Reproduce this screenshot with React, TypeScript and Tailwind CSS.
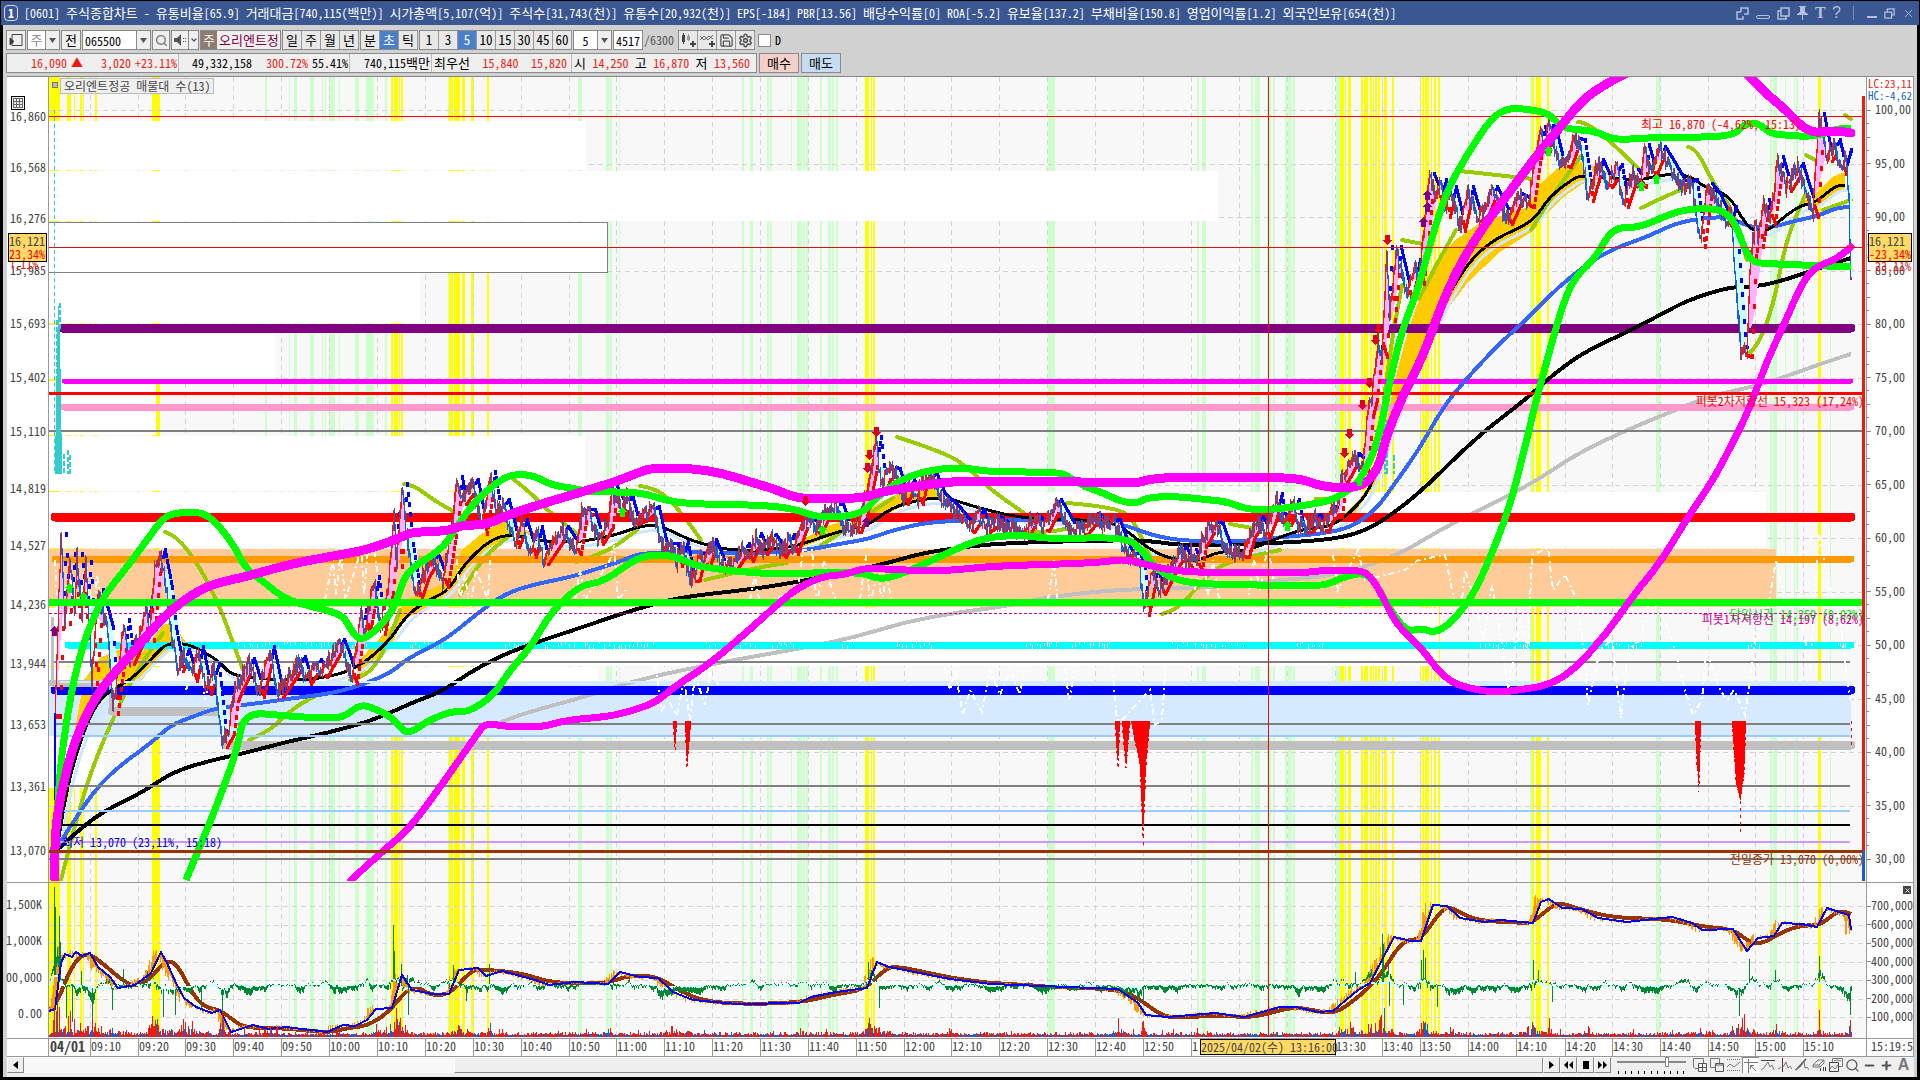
import React from 'react';
import {
  ChevronDown, Copy, Minus, Plus, Save, Search, Settings, X,
} from 'lucide-react';

type Point = [number, number];

// chart units: x 49..1866, y 77..1038
const LEFT = 49;
const TOP = 77;
const WIDTH = 1817;
const HEIGHT = 961;

const pctX = (x: number) => `${((x - LEFT) / WIDTH) * 100}%`;
const pctY = (y: number) => `${((y - TOP) / HEIGHT) * 100}%`;

const parse = (s: string): Point[] => s.trim().split(/\s+/).map((p) => p.split(',').map(Number) as Point);

const random = (seed: number) => () => {
  seed = (seed * 1664525 + 1013904223) % 4294967296;
  return seed / 4294967296;
};

// one value per pixel column
const sample = (pts: Point[], from: number, to: number) => {
  const out: number[] = [];
  let k = 0;
  for (let x = from; x <= to; x++) {
    while (k < pts.length - 2 && pts[k + 1][0] < x) k++;
    const [x0, y0] = pts[k];
    const [x1, y1] = pts[k + 1];
    const t = Math.min(1, Math.max(0, (x - x0) / Math.max(1, x1 - x0)));
    out.push(y0 + (y1 - y0) * t);
  }
  return out;
};

// smooth path through the points
const smooth = (s: string) => {
  const p = parse(s);
  let d = `M${p[0][0]} ${p[0][1]}`;
  for (let i = 1; i < p.length - 1; i++) {
    d += `Q${p[i][0]} ${p[i][1]} ${(p[i][0] + p[i + 1][0]) / 2} ${(p[i][1] + p[i + 1][1]) / 2}`;
  }
  const l = p[p.length - 1];
  return `${d}L${l[0]} ${l[1]}`;
};

const YELLOW_BANDS: Point[] = [
  [49, 60], [67, 71], [74, 75], [80, 82], [83, 84], [95, 97], [152, 160], [391, 393], [394, 398], [399, 400], [401, 403],
  [449, 453], [454, 460], [462, 465], [471, 474], [487, 489], [865, 869], [871, 872], [873, 875], [1340, 1344], [1345, 1346],
  [1348, 1351], [1361, 1363], [1364, 1368], [1370, 1372], [1373, 1374], [1375, 1377], [1378, 1380], [1382, 1383], [1384, 1387],
  [1392, 1394], [1420, 1421], [1422, 1424], [1425, 1429], [1431, 1432], [1434, 1436], [1438, 1440], [1532, 1534], [1536, 1541],
  [1547, 1549], [1818, 1821],
];

const GREEN_BANDS: Point[] = [
  [265, 267], [289, 290], [294, 297], [310, 314], [322, 323], [325, 326], [329, 335], [339, 340], [355, 359], [366, 374],
  [385, 387], [448, 449], [578, 582], [606, 609], [610, 612], [619, 620], [742, 744], [750, 753], [767, 769], [770, 772],
  [791, 792], [797, 802], [803, 805], [806, 808], [820, 822], [828, 831], [832, 834], [836, 838], [1048, 1055], [1197, 1199],
  [1202, 1206], [1251, 1253], [1255, 1260], [1267, 1271], [1273, 1275], [1285, 1287], [1288, 1292], [1293, 1295], [1332, 1333],
  [1336, 1340], [1530, 1532], [1656, 1660], [1770, 1772], [1773, 1777], [1785, 1786], [1794, 1795], [1796, 1798], [1830, 1831],
];

// volume-at-price rows: y0, y1, right edge
const PROFILE = [
  [121, 170, 586], [171, 221, 1218], [222, 272, 608], [273, 323, 420], [325, 379, 275], [381, 435, 156], [436, 491, 585],
  [492, 548, 1766], [608, 666, 1439], [667, 727, 598], [728, 788, 104],
];

const TIMES: [number, string][] = [
  [90, '09:10'], [138, '09:20'], [185, '09:30'], [233, '09:40'], [281, '09:50'], [329, '10:00'], [377, '10:10'], [425, '10:20'],
  [473, '10:30'], [521, '10:40'], [569, '10:50'], [616, '11:00'], [664, '11:10'], [712, '11:20'], [760, '11:30'], [808, '11:40'],
  [856, '11:50'], [904, '12:00'], [951, '12:10'], [999, '12:20'], [1047, '12:30'], [1095, '12:40'], [1143, '12:50'],
  [1191, '1'], [1335, '13:30'], [1382, '13:40'], [1420, '13:50'], [1468, '14:00'],
  [1516, '14:10'], [1565, '14:20'], [1612, '14:30'], [1660, '14:40'], [1708, '14:50'], [1755, '15:00'], [1803, '15:10'],
];

const LEFT_LABELS: [number, string][] = [
  [117, '16,860'], [168, '16,568'], [219, '16,276'], [271, '15,985'], [324, '15,693'], [378, '15,402'], [432, '15,110'],
  [489, '14,819'], [546, '14,527'], [605, '14,236'], [664, '13,944'], [725, '13,653'], [787, '13,361'], [851, '13,070'],
  [905, '1,500K'], [941, '1,000K'], [978, '00,000'], [1014, '0.00'],
];

const RIGHT_LABELS: [number, string][] = [
  ...Array.from({ length: 15 }, (_, i): [number, string] => [110 + i * 53.5, `${100 - i * 5},00`]),
  ...Array.from({ length: 7 }, (_, i): [number, string] => [906 + i * 18.5, `${7 - i}00,000`]),
];

// y, x0, x1, width, colour
const LEVELS: [number, number, number, number, string][] = [
  [116.5, 49, 1864, 1, '#ff0000'], [431, 49, 1864, 2, '#808080'], [662, 54, 1850, 2, '#808080'], [682, 60, 1850, 2, '#d6eaff'],
  [724, 54, 1850, 2, '#808080'], [736, 54, 1850, 2, '#99ccff'], [786, 54, 1850, 2, '#808080'], [811, 64, 1850, 2, '#99ccff'],
  [825, 54, 1850, 2, '#000000'], [842, 60, 1850, 2, '#cc99ff'], [859, 49, 1864, 2, '#808080'],
];

const THICK_LEVELS: [number, number, number, number, string][] = [
  [328, 62, 1851, 9, '#800080'], [381, 64, 1851, 5, '#ff00ff'], [407, 64, 1851, 7, '#ff99cc'],
  [517, 55, 1851, 9, '#ff0000'], [559, 55, 1851, 7, '#ff9900'], [645, 68, 1851, 7, '#00ffff'], [690, 55, 1851, 9, '#0000ff'],
  [683, 52, 109, 7, '#c0c0c0'], [711, 112, 222, 9, '#c0c0c0'], [745, 226, 1851, 9, '#c0c0c0'],
];

const FAST = '57,850 65,797 78,747 94,707 110,690 131,680 155,655 167,643 188,644 204,652 220,662 233,677 286,680 318,679 355,670 388,643 408,613 433,598 449,590 465,563 490,540 510,534 547,542 580,542 616,535 640,526 660,525 693,542 738,552 795,547 836,532 869,525 885,512 905,503 942,496 975,507 1024,519 1089,520 1113,522 1130,533 1146,547 1167,558 1195,562 1220,551 1248,551 1280,537 1304,529 1333,526 1353,510 1370,490 1385,445 1400,400 1422,350 1445,300 1470,260 1496,238 1533,222 1549,197 1574,178 1582,176 1619,178 1635,181 1672,173 1692,177 1704,187 1729,195 1741,217 1753,232 1770,230 1786,215 1802,205 1815,203 1835,186 1845,185';
const MID = '57,848 82,807 110,773 151,743 171,725 192,717 216,708 253,704 294,698 335,693 367,683 392,672 408,658 445,640 473,617 502,595 531,585 571,577 600,568 624,560 640,553 693,552 738,554 803,551 844,543 869,539 893,530 934,521 1024,519 1118,522 1150,535 1183,541 1244,542 1280,537 1321,534 1353,527 1378,507 1390,490 1419,450 1443,407 1468,377 1500,343 1529,317 1558,287 1590,262 1615,248 1647,237 1676,223 1704,218 1729,217 1749,227 1770,228 1798,220 1819,216 1835,208 1851,207';
const SLOW = '57,850 82,827 106,810 143,792 171,773 204,762 245,753 286,742 327,733 367,722 392,712 416,701 441,692 469,673 498,657 531,644 571,631 612,617 640,608 681,597 754,589 803,581 885,564 918,554 962,547 1007,543 1081,541 1146,540 1183,546 1280,543 1337,539 1370,529 1402,507 1431,482 1456,457 1488,428 1525,400 1549,378 1582,353 1627,332 1660,315 1688,300 1729,287 1753,287 1778,282 1811,271 1835,263 1851,258';
const SILVER = '490,727 510,718 543,708 584,697 640,679 722,662 803,648 856,637 905,622 954,613 1007,606 1048,597 1122,589 1211,588 1280,580 1321,577 1362,568 1402,553 1443,528 1484,508 1533,483 1578,453 1627,430 1668,413 1713,395 1753,387 1790,375 1823,363 1851,354';
const GREEN_UPPER = '55,845 59,780 65,730 75,673 88,630 102,600 110,588 127,567 147,540 163,518 175,513 192,512 206,514 220,527 235,547 245,568 265,583 286,600 318,608 343,615 351,630 359,640 371,635 392,613 400,590 408,570 441,550 453,533 473,503 502,478 518,474 535,476 551,485 571,488 592,492 640,492 664,500 689,504 762,505 795,509 816,517 844,517 864,512 877,497 897,482 918,473 946,468 967,468 991,472 1060,472 1069,477 1085,487 1101,492 1122,502 1138,503 1146,498 1171,496 1211,500 1228,502 1248,510 1280,509 1313,504 1333,500 1353,487 1362,477 1378,443 1390,380 1402,330 1419,287 1431,240 1447,190 1468,153 1492,117 1509,108 1525,109 1549,113 1562,128 1582,130 1598,132 1613,140 1647,138 1668,137 1733,137 1745,123 1758,123 1770,133 1782,135 1815,137 1839,128 1851,129';
const GREEN_LOWER = '186,880 204,837 220,797 237,750 244,712 286,716 322,718 343,718 359,705 371,707 392,717 404,732 412,732 429,720 453,711 469,712 494,695 510,670 531,647 551,612 580,585 604,582 640,555 673,555 693,565 722,570 771,574 803,574 824,572 864,573 877,579 893,577 918,567 958,548 987,537 1024,535 1048,539 1126,537 1142,550 1154,567 1175,580 1203,584 1252,585 1321,586 1333,582 1349,575 1366,573 1378,587 1390,610 1407,632 1421,628 1435,633 1451,623 1472,597 1488,563 1505,520 1517,480 1537,397 1549,353 1562,307 1574,278 1594,260 1613,227 1639,228 1672,213 1696,208 1725,210 1737,227 1745,250 1753,263 1778,264 1851,267';
const MAGENTA_UPPER = '55,880 54,840 61,790 75,740 92,703 108,680 135,650 163,617 188,597 212,584 245,577 286,565 327,557 367,550 402,537 412,532 449,531 461,525 486,525 510,514 551,501 612,483 640,472 652,468 689,468 722,473 750,482 775,489 795,498 824,499 864,498 881,492 905,488 938,483 967,481 1048,481 1113,483 1138,483 1150,479 1179,477 1296,477 1317,485 1337,488 1358,487 1370,480 1380,463 1386,437 1402,397 1423,357 1443,300 1464,257 1488,220 1509,193 1533,160 1558,130 1582,100 1607,83 1640,66 1690,50 1735,62 1753,80 1770,97 1786,110 1802,127 1815,133 1827,131 1839,131 1851,133';
const MAGENTA_LOWER = '351,880 384,850 408,830 433,797 457,763 478,733 485,723 510,727 543,727 567,720 604,717 624,713 640,708 656,702 677,685 705,667 738,640 779,603 799,587 824,576 844,575 864,568 885,569 926,571 958,570 991,566 1097,563 1122,559 1142,563 1166,570 1211,573 1304,573 1325,570 1358,570 1370,575 1382,595 1394,620 1407,635 1423,650 1435,667 1451,682 1468,688 1496,693 1525,689 1549,685 1574,670 1607,633 1635,593 1660,563 1688,517 1713,480 1729,450 1749,410 1766,363 1786,320 1802,283 1815,267 1835,260 1851,247';

const OLIVE = [
  '61,880 78,813 94,763 118,707 139,667 163,633', '165,532 176,535 200,567 220,607 233,643 245,675', '249,740 269,732 294,707 322,693',
  '350,680 367,677 385,650 400,610', '404,484 414,485 433,500 469,520', '512,478 531,493 547,510 576,533', '576,562 608,552 637,530',
  '640,486 658,488 681,512 701,540', '705,580 754,568 787,563', '820,546 848,528 893,498', '897,437 946,453 967,467 991,490 1024,513',
  '1028,532 1052,532 1073,527', '1067,503 1116,507 1134,520 1150,557', '1162,614 1175,611 1195,590 1220,563 1280,550', '1230,524 1252,528',
  '1316,499 1340,500', '1384,400 1390,350 1402,285', '1402,240 1423,244', '1419,299 1435,267 1456,230', '1460,171 1533,179',
  '1531,230 1549,200 1582,155', '1578,122 1586,122 1611,142 1639,169', '1641,208 1664,197 1692,185', '1688,147 1696,148 1713,183 1733,210 1747,260',
  '1747,355 1758,347 1774,303 1786,240 1806,193', '1806,155 1819,162', '1845,115 1851,119', '1823,210 1851,200', '460,595 480,560 510,535',
];

const CLOUDS = [
  '62,800 72,745 84,680 100,658 118,650 140,655 163,625 172,622 190,648 167,650 140,682 110,692 92,712 76,760 66,800',
  '355,665 392,625 405,600 430,590 450,580 462,550 480,535 500,522 512,522 535,535 512,536 490,552 465,575 450,590 425,610 405,618 388,650 360,675',
  '795,543 830,525 860,515 885,500 897,494 935,488 945,496 905,505 885,515 865,525 840,533 800,548',
  '1338,520 1360,498 1374,480 1385,430 1395,380 1404,345 1415,310 1435,262 1455,240 1480,223 1509,213 1529,207 1541,183 1558,168 1582,162 1607,172 1615,176 1590,182 1582,184 1562,198 1548,212 1533,231 1500,252 1468,282 1443,315 1423,363 1402,413 1384,460 1374,485 1350,520',
  '1800,203 1815,195 1832,177 1845,172 1845,188 1832,195 1815,208',
];

const PRICE = '55,713 61,537 65,620 70,557 75,613 77,557 82,613 86,565 92,680 98,593 108,630 113,710 124,623 129,660 139,637 147,607 149,637 155,570 160,553 167,590 171,630 178,667 184,653 192,677 198,650 206,690 214,667 222,743 229,730 233,697 237,687 249,662 259,693 269,650 278,693 300,660 306,680 316,663 322,673 339,643 344,655 352,680 361,613 365,630 374,580 380,630 388,590 394,517 397,563 402,487 408,547 416,597 424,573 433,557 443,583 453,520 457,480 461,500 473,483 482,530 490,475 496,513 504,503 514,543 522,523 531,553 537,530 543,560 563,530 576,550 582,513 590,513 598,540 608,523 612,490 622,510 627,497 633,520 640,517 654,510 662,547 673,547 677,562 683,545 689,578 695,576 699,557 705,563 711,543 720,565 732,565 744,547 748,557 756,537 762,550 771,538 781,553 789,538 793,550 801,527 805,517 816,530 826,510 838,507 844,525 856,528 862,513 867,490 871,470 876,440 881,487 887,470 895,472 903,500 909,483 918,500 922,480 932,478 940,497 954,510 969,528 979,513 985,528 995,520 1005,527 1024,532 1032,518 1044,527 1056,503 1064,517 1071,530 1083,530 1093,517 1105,525 1115,523 1122,543 1130,560 1134,553 1140,570 1144,611 1152,573 1160,590 1171,567 1181,550 1189,567 1191,553 1197,567 1201,543 1211,525 1218,527 1226,550 1244,553 1250,533 1258,520 1265,533 1271,517 1277,497 1280,517 1286,521 1294,503 1298,527 1307,528 1315,518 1323,528 1331,510 1337,513 1341,480 1347,470 1354,457 1363,467 1368,413 1372,397 1378,340 1382,353 1387,250 1390,317 1396,250 1407,297 1415,263 1419,280 1423,240 1429,177 1437,197 1441,183 1445,213 1451,190 1460,227 1468,190 1476,217 1484,210 1492,190 1507,220 1517,197 1529,203 1535,160 1540,130 1545,147 1549,123 1558,160 1566,163 1574,142 1580,143 1588,197 1598,163 1607,183 1617,168 1623,203 1633,173 1641,183 1644,148 1651,173 1660,150 1668,163 1682,187 1692,183 1700,243 1707,187 1715,197 1727,223 1731,210 1737,297 1741,350 1747,353 1751,253 1756,223 1758,243 1764,203 1770,220 1778,160 1786,187 1798,167 1804,187 1813,213 1819,117 1827,157 1835,143 1841,170 1846,153 1849,203 1851,280';

const WHITE_TRACES = [
  '55,560 58,620 70,570 76,630 86,560 92,640 97,575 108,640', '325,600 333,560 336,595 341,550 345,600 358,560 361,545 364,595 368,550 375,552 380,600',
  '448,590 453,555 456,545 460,600 465,575 470,610 476,570 488,600 490,560', '575,600 580,570 585,600 610,560 614,545 618,600 626,590',
  '750,600 755,575 760,605 798,590 803,550 812,550 817,605 824,560 832,590 838,605', '860,600 866,555 870,605 878,570 882,605 886,575 893,605',
  '1048,600 1054,560 1058,605', '1195,590 1202,545 1208,595 1213,560 1220,605', '1247,605 1254,560 1260,590 1268,545 1275,590', '186,690 200,650 205,700 214,660 222,735',
  '945,668 950,690 955,670 963,715 970,690 982,712 990,670 1000,695 1010,670 1020,695 1024,670', '1065,668 1069,700 1075,670', '1112,665 1117,720 1122,720 1150,690 1155,725 1162,720 1166,660',
  '655,665 662,710 668,700 677,715 684,680 690,720 695,675 705,705 712,665 718,685', '1333,555 1338,590 1358,550 1365,580 1405,570 1418,560 1445,555 1452,590 1460,620 1465,570 1475,600 1483,640 1492,585 1503,650 1508,690 1520,620 1528,650 1532,555 1548,548 1553,590 1565,575 1577,600 1584,650 1588,705 1600,650 1612,640 1621,718 1628,650 1640,640 1650,600 1660,610 1672,640 1685,690 1693,715 1702,700 1706,650 1720,690 1727,700 1734,690 1745,715 1755,640 1765,625 1776,560 1785,600 1797,590 1810,670 1819,535 1830,590 1840,620 1850,700',
];

// ranges where the cyan level is broken up by white ticks
const CYAN_BREAKS: Point[] = [
  [238, 330], [352, 372], [410, 445], [505, 530], [545, 575], [585, 656], [706, 720], [740, 760], [772, 796], [842, 858],
  [897, 936], [1026, 1060], [1072, 1112], [1172, 1190], [1195, 1216], [1222, 1244], [1297, 1325], [1480, 1530], [1608, 1625],
  [1628, 1645], [1748, 1760], [1806, 1815], [1838, 1850],
];

const DROPS = [
  '673,721 677,721 675,750', '685,721 691,721 687,768', '1115,721 1120,721 1118,768', '1122,721 1130,721 1126,768', '1131,721 1150,721 1146,765 1143,838 1140,765',
  '1695,721 1701,721 1699,785 1697,765', '1732,721 1746,721 1744,775 1740,800 1736,780',
];

const BROWN = '49,1011 57,1003 67,977 78,957 90,954 102,963 122,980 135,987 151,978 163,963 173,961 182,973 192,993 204,1007 220,1010 233,1020 245,1028 286,1028 327,1033 347,1028 367,1026 388,1013 404,993 416,985 429,995 449,995 469,973 478,969 522,973 551,983 604,984 624,977 640,975 660,978 681,992 705,1001 738,1004 799,1003 836,994 864,990 885,969 897,966 946,977 987,983 1028,985 1048,987 1118,989 1138,998 1162,1016 1179,1018 1220,1015 1252,1018 1280,1010 1300,1007 1329,1014 1345,1008 1378,980 1402,940 1421,940 1439,913 1449,906 1468,917 1484,921 1525,923 1533,922 1553,905 1562,903 1582,910 1615,918 1668,919 1704,927 1733,929 1749,942 1762,944 1782,932 1802,925 1819,926 1835,913 1843,911 1851,914';
const NAVY = '49,1011 55,1009 61,963 65,954 72,957 76,952 82,956 90,953 98,967 110,977 118,988 135,985 151,973 161,952 167,963 176,983 184,998 196,1007 212,1013 220,1010 231,1032 253,1025 269,1029 286,1027 327,1032 343,1025 355,1026 367,1020 376,1009 392,1008 402,975 412,990 433,994 449,994 459,970 478,968 486,976 502,971 535,980 549,985 576,982 608,984 620,972 640,977 658,978 673,992 693,1000 738,1004 799,1003 811,997 836,992 867,988 877,962 889,967 950,979 991,984 1118,989 1138,1003 1146,1015 1167,1017 1215,1013 1244,1017 1280,1007 1296,1007 1317,1012 1333,1011 1358,990 1370,983 1382,960 1394,937 1411,941 1421,941 1433,905 1447,906 1460,918 1484,922 1500,920 1533,923 1541,902 1549,899 1562,908 1582,909 1598,918 1627,922 1672,917 1692,923 1702,930 1733,929 1747,951 1758,938 1774,936 1782,923 1802,924 1817,927 1827,908 1839,912 1849,915 1851,930';

// oscillator extremes that stand out of the noise
const SPIKES: Record<number, number> = {
  54: -90, 55: -70, 59: -64, 60: -40, 66: 30, 72: 36, 81: -16, 92: 42, 112: 20, 123: -18, 147: -14, 163: 26, 175: 24, 201: 20, 222: 38,
  393: -56, 394: -30, 401: -24, 408: 26, 453: -18, 466: 14, 489: -22, 868: -20, 879: 20, 1143: 14, 1355: -14, 1382: -50, 1383: -40, 1389: 22, 1403: 18,
  1421: -22, 1423: -32, 1425: -24, 1437: 20, 1533: -22, 1538: -14, 1552: 14, 1739: 26, 1749: -26, 1775: -14, 1819: -28, 1850: 26,
};

const HOT: [number, number, number][] = [
  [57, 60, 6], [70, 25, 14], [92, 18, 10], [112, 14, 12], [157, 28, 12], [185, 14, 20], [222, 24, 3], [270, 8, 12], [376, 12, 6], [396, 28, 12], [460, 12, 14],
  [490, 22, 3], [608, 12, 4], [672, 10, 8], [687, 8, 6], [800, 8, 5], [868, 22, 8], [878, 8, 14], [949, 8, 4], [1118, 12, 8], [1142, 14, 4],
  [1341, 12, 6], [1350, 14, 6], [1370, 14, 10], [1384, 46, 8], [1425, 24, 10], [1450, 9, 8], [1532, 14, 14], [1549, 18, 4], [1588, 10, 4], [1700, 8, 12], [1742, 18, 14],
  [1775, 10, 8], [1819, 26, 4], [1850, 16, 6],
];

const DOWN_ARROWS: Point[] = [
  [876, 432], [869, 455], [867, 468], [805, 501], [1387, 240], [1378, 329], [1375, 340], [1369, 383], [1362, 405], [1349, 434], [1344, 453],
];
const PURPLE_ARROWS: Point[] = [[54, 631], [866, 522], [1423, 222], [1427, 207], [1427, 195]];
const GREEN_ARROWS: Point[] = [
  [69, 588], [83, 597], [473, 504], [622, 512], [822, 530], [1287, 526], [1359, 481], [1548, 151], [1641, 186], [1656, 179],
];

const buildPrice = () => {
  const rnd = random(7);
  const clean = sample(parse(PRICE), 55, 1851);
  const line = clean.map((y) => y + (rnd() - 0.5) * 12);
  let red = '';
  let blue = '';
  let highs = '';
  let lows = '';
  let rise = '';
  let fall = '';
  line.forEach((y, i) => {
    const x = 55 + i;
    const next = line[i + 1] ?? y;
    const pad = 1 + rnd() * 5;
    const bar = `M${x + 0.5} ${(Math.min(y, next) - pad).toFixed(1)}V${(Math.max(y, next) + pad).toFixed(1)}`;
    if (next > y) blue += bar;
    else red += bar;
    // trailing stops: highs above a falling leg, lows under a rising one
    const at = Math.max(0, i - 5);
    const lag = clean[at];
    const step = clean[at + 1] - lag;
    const len = Math.min(4, Math.max(2, Math.abs(step)));
    if (clean[i] - lag > 2) highs += `M${x + 0.5} ${(lag - 5).toFixed(1)}v${(len + 1).toFixed(1)}`;
    if (lag - clean[i] > 2) lows += `M${x + 0.5} ${(lag + 6).toFixed(1)}v${(-len - 1).toFixed(1)}`;
    const old = line.slice(Math.max(0, i - 14), i + 1);
    const avg = old.reduce((a, b) => a + b, 0) / old.length;
    const gap = `M${x + 0.5} ${avg.toFixed(1)}V${y.toFixed(1)}`;
    if (avg > y) rise += gap;
    else fall += gap;
  });
  return { red, blue, highs, lows, rise, fall };
};

const buildLower = () => {
  const rnd = random(21);
  const navy = sample(parse(NAVY), 49, 1851);
  let orange = '';
  let osc = '';
  let base = '';
  let volRed = '';
  let volBlue = '';
  let drift = 0;
  navy.forEach((y, i) => {
    const x = 49 + i + 0.5;
    const ahead = navy[Math.min(i + 6, navy.length - 1)];
    const move = ahead - y;
    const tip = y + move * 0.9 + (rnd() - 0.5) * (4 + Math.abs(move) * 0.9);
    orange += `M${x} ${y.toFixed(1)}V${tip.toFixed(1)}`;
    const mid = 986 + Math.max(-10, Math.min(10, move * 0.3));
    base += `${i ? 'L' : 'M'}${x} ${mid.toFixed(1)}`;
    drift = drift * 0.84 + (rnd() - 0.5) * (5 + Math.abs(move) * 0.7);
    const swing = SPIKES[49 + i] ?? drift + move * 0.15;
    const from = SPIKES[49 + i] ? mid : mid + swing * 0.4;
    osc += `M${x} ${(from - 1).toFixed(1)}V${(mid + swing + 1).toFixed(1)}`;
    let h = 1 + rnd() * 3;
    HOT.forEach(([hx, top, w]) => {
      const d = Math.abs(49 + i - hx) / w;
      if (d < 1.6) h += top * Math.exp(-d * d * 2) * rnd() * rnd() * 1.3;
      if (49 + i === hx) h = top;
    });
    if (rnd() > 0.95) h += 6 * rnd();
    const bar = `M${x} 1037V${(1036 - h).toFixed(1)}`;
    if (rnd() > 0.42) volRed += bar;
    else volBlue += `M${x} 1037V${(1036 - h * 0.6).toFixed(1)}`;
  });
  return { orange, osc, base, volRed, volBlue };
};

const buildTicks = () => {
  const rnd = random(3);
  let d = '';
  CYAN_BREAKS.forEach(([a, b]) => {
    for (let x = a; x < b; x += 2 + Math.floor(rnd() * 5)) d += `M${x + 0.5} ${642 + Math.floor(rnd() * 4)}v${2 + Math.floor(rnd() * 4)}`;
  });
  return d;
};

const price = buildPrice();
const lower = buildLower();
const cyanTicks = buildTicks();

const Plot: React.FC = () => (
  <svg
    className="absolute inset-0 h-full w-full"
    viewBox={`${LEFT} ${TOP} ${WIDTH} ${HEIGHT}`}
    preserveAspectRatio="none"
    shapeRendering="crispEdges"
    fill="none"
    role="img"
    aria-label="오리엔트정공 차트"
  >
    <defs>
      <clipPath id="main-pane"><rect x="49" y="77" width="1817" height="804" /></clipPath>
    </defs>
    <rect x="49" y="77" width="1817" height="961" fill="#f8f8f8" />
    {GREEN_BANDS.map(([a, b]) => <rect key={a} x={a} y="77" width={b - a} height="959" fill="#ccffcc" />)}
    {YELLOW_BANDS.map(([a, b]) => <rect key={a} x={a} y="77" width={b - a} height="959" fill="#ffff00" />)}
    <g stroke="#d4d4d4" strokeDasharray="5 4">
      {TIMES.map(([x]) => <path key={x} d={`M${x + 0.5} 77V1037`} />)}
      <path d="M1239.5 77V1037M1287.5 77V1037" />
      {RIGHT_LABELS.map(([y]) => <path key={y} d={`M49 ${Math.round(y) + 0.5}H1864`} />)}
    </g>
    {PROFILE.map(([y0, y1, x]) => <rect key={y0} x="49" y={y0} width={x - 49} height={y1 - y0} fill="#fff" />)}
    <rect x="49" y="549" width="1727" height="58" fill="#ffcc99" />
    <rect x="49" y="681" width="1802" height="55" fill="#d6eaff" />
    <rect x="48.5" y="222.5" width="559" height="50" stroke="#808080" />

    <g clipPath="url(#main-pane)">
      {CLOUDS.map((c) => <polygon key={c} points={c} fill="#ffcc00" />)}
      <path d={smooth(SILVER)} stroke="#c0c0c0" strokeWidth="4" />
      <path d={smooth(FAST)} stroke="#cfe6ff" strokeWidth="3" transform="translate(3 5)" />
      {OLIVE.map((o) => <path key={o} d={smooth(o)} stroke="#99cc00" strokeWidth="4" strokeLinecap="round" />)}
      {THICK_LEVELS.map(([y, a, b, w, c]) => (
        <path key={y} d={`M${a} ${y}H${b}`} stroke={c} strokeWidth={w} strokeLinecap="round" />
      ))}
      <path d={cyanTicks} stroke="#fff" />
      <path d="M52 617V683M110 683V711M222 711V745" stroke="#c0c0c0" strokeWidth="3" />
      <path d={smooth(SLOW)} stroke="#000" strokeWidth="4" />
      <path d={smooth(MID)} stroke="#3366ff" strokeWidth="4" />
      <path d={smooth(FAST)} stroke="#000" strokeWidth="3" />
      {LEVELS.map(([y, a, b, w, c]) => <path key={y} d={`M${a} ${y}H${b}`} stroke={c} strokeWidth={w} />)}
      <path d={price.rise} stroke="#ffb3ff" />
      <path d={price.fall} stroke="#ccffff" />
      {WHITE_TRACES.map((t) => <polyline key={t} points={t} stroke="#fff" strokeWidth="2" strokeDasharray="6 4 2 3" />)}
      {DROPS.map((d) => <polygon key={d} points={d} fill="#ff0000" stroke="#ff0000" strokeDasharray="3 3" />)}
      <path d="M1143 800V845M1698 770V792M1740 780V835M1851 721V745" stroke="#ff0000" strokeDasharray="3 4" />
      <path d="M54.5 110V474" stroke="#33cccc" strokeDasharray="4 3" />
      <polygon points="55,474 56,400 58,310 59,303 61,390 62,474" fill="#33cccc" />
      <path d="M60 303V330M57 320V474M64 454V474M68 450V474M70 455V474" stroke="#33cccc" strokeDasharray="5 2" strokeWidth="2" />
      <path d="M1379 440V474M1385 400V474M1387 420V474M1394 455V474" stroke="#33cccc" strokeDasharray="6 2" strokeWidth="2" />
      <path d={price.highs} stroke="#0000ff" strokeWidth="3" />
      <path d={price.lows} stroke="#ff0000" strokeWidth="3" />
      <path d={price.blue} stroke="#1a5fd0" />
      <path d={price.red} stroke="#ee1c10" />
      <path d="M54.5 713V880" stroke="#0000ff" strokeWidth="2" />
      <path d="M49 393H1864" stroke="#ff0000" strokeWidth="3" />
      <path d="M49 602H1864" stroke="#00ff00" strokeWidth="7" />
      <path d="M49 613.5H1864" stroke="#cc0099" strokeDasharray="3 2" />
      <path d={smooth(GREEN_UPPER)} stroke="#00ff00" strokeWidth="7" strokeLinejoin="round" />
      <path d={smooth(GREEN_LOWER)} stroke="#00ff00" strokeWidth="7" strokeLinejoin="round" />
      <path d={smooth(MAGENTA_LOWER)} stroke="#ff00ff" strokeWidth="7" strokeLinejoin="round" strokeLinecap="round" />
      <path d={smooth(MAGENTA_UPPER)} stroke="#ff00ff" strokeWidth="9" strokeLinejoin="round" strokeLinecap="round" />
      <path d="M49 851.5H1864" stroke="#993300" strokeWidth="3" />
      {DOWN_ARROWS.map(([x, y]) => <path key={`${x}-${y}`} d={`M${x - 2} ${y - 5}h5v5h2l-4.5 5l-4.5 -5h2z`} fill="#dd0022" />)}
      {PURPLE_ARROWS.map(([x, y]) => <path key={`${x}-${y}`} d={`M${x - 2} ${y + 5}h5v-5h2l-4.5 -5l-4.5 5h2z`} fill="#800080" />)}
      {GREEN_ARROWS.map(([x, y]) => <path key={`${x}-${y}`} d={`M${x - 2} ${y + 5}h5v-5h2l-4.5 -5l-4.5 5h2z`} fill="#00ff00" />)}
    </g>

    <path d="M49 882.5H1866" stroke="#999" />
    <path d={smooth(BROWN)} stroke="#993300" strokeWidth="4" />
    <path d={lower.orange} stroke="#ff9900" />
    <path d={lower.base} stroke="#ccffff" strokeWidth="2" />
    <path d={lower.osc} stroke="#008833" />
    <polyline points={NAVY} stroke="#0000ff" strokeWidth="2" />
    <path d={lower.volBlue} stroke="#1a5fd0" />
    <path d={lower.volRed} stroke="#ee1c10" />

    <path d="M49 247.5H1864M1268.5 77V1037" stroke="#dd1111" />
    <path d="M1863.5 96V851" stroke="#ee1c10" strokeWidth="3" />
    <path d="M1863.5 851V881" stroke="#1a5fd0" strokeWidth="3" />
  </svg>
);

const Axis: React.FC<{ side: 'left' | 'right'; labels: [number, string][] }> = ({ side, labels }) => (
  <ul className="absolute inset-0 text-[#444]">
    {labels.map(([y, text]) => (
      <li
        key={`${y}${text}`}
        className={`absolute -translate-y-1/2 leading-4 ${side === 'left' ? 'right-0.5' : 'left-1'} ${side === 'left' && y > 890 ? 'pr-1' : ''} ${side === 'right' && y < 890 ? 'pl-1' : ''}`}
        style={{ top: pctY(y - 1) }}
      >
        {text}
      </li>
    ))}
  </ul>
);

const PlotLabel: React.FC<{ y: number; x?: number; right?: number; className: string; children: string }> = ({ y, x, right, className, children }) => (
  <span
    className={`absolute -translate-y-1/2 leading-4 whitespace-nowrap ${className}`}
    style={{ top: pctY(y - 1), left: x === undefined ? undefined : pctX(x), right: right === undefined ? undefined : `${((1866 - right) / WIDTH) * 100}%` }}
  >
    {children}
  </span>
);

const TITLE = '[0601] 주식종합차트 - 유통비율[65.9] 거래대금[740,115(백만)] 시가총액[5,107(억)] 주식수[31,743(천)] 유통수[20,932(천)] EPS[-184] PBR[13.56] 배당수익률[0] ROA[-5.2] 유보율[137.2] 부채비율[150.8] 영업이익률[1.2] 외국인보유[654(천)]';

const Mixed: React.FC<{ text: string }> = ({ text }) => (
  <>
    {text.split(/([가-힣]+)/).map((run, i) => (i % 2 ? <span key={i} className="text-[13px]">{run}</span> : run))}
  </>
);

const TitleBar: React.FC = () => (
  <header className="flex h-6 items-center justify-between bg-[#3a5792] pr-1 pl-[3px] text-white">
    <div className="flex items-center gap-1.5 whitespace-pre">
      <span className="flex h-4 w-3.5 items-center justify-center rounded-sm border border-white/80 font-bold">1</span>
      <h1 className="leading-5"><Mixed text={TITLE} /></h1>
    </div>
    <div className="flex items-center gap-[7px] text-[#b4c0da]">
      <button aria-label="새 창">
        <svg width="13" height="13" viewBox="0 0 13 13" fill="none" stroke="currentColor" strokeWidth="1.5"><path d="M5 5V1h7v6H8M4 5H1v7h6V9M1 5h4" /></svg>
      </button>
      <button aria-label="접기" className="flex h-3 w-3.5 items-end"><span className="h-1 w-full rounded-full border border-current" /></button>
      <button aria-label="복사">
        <svg width="13" height="13" viewBox="0 0 13 13" fill="none" stroke="currentColor" strokeWidth="1.5"><path d="M4 1h8v8H4zM4 4H1v8h8V9" /></svg>
      </button>
      <button aria-label="고정">
        <svg width="11" height="14" viewBox="0 0 11 14" fill="currentColor"><path d="M2 0h7v1H8v5l3 2v1H6v5H5V9H0V8l3-2V1H2z" /></svg>
      </button>
      <button className="w-2.5 font-['Liberation_Serif',serif] text-[16px] leading-4 font-bold">T</button>
      <button className="w-2 font-['Liberation_Sans',sans-serif] text-[16px] leading-4">?</button>
      <span className="mx-1.5 h-3.5 w-px bg-[#7a8db8]" />
      <button aria-label="최소화" className="flex h-2.5 w-2.5 items-end"><span className="h-0.5 w-full bg-current" /></button>
      <button aria-label="이전 크기">
        <svg width="11" height="11" viewBox="0 0 13 13" fill="none" stroke="currentColor" strokeWidth="1.5"><path d="M4 4V1h8v7H9M1 5h8v7H1z" /></svg>
      </button>
      <button aria-label="닫기"><X size={13} strokeWidth={1.5} /></button>
    </div>
  </header>
);

const box = 'flex h-5 items-center justify-center border border-[#8a8a8a] bg-[#efefef]';

const cell = 'flex w-[19px] items-center justify-center border-r border-[#999]';

const Group: React.FC<{ items: string[]; active?: string }> = ({ items, active }) => (
  <div className="flex h-5 border-y border-l border-[#8a8a8a] bg-[#e8e8e8] text-[13px]">
    {items.map((item) => (
      <button key={item} className={`${cell} leading-4 ${item === active ? 'bg-[#4a80c8] text-white' : ''}`}>{item}</button>
    ))}
  </div>
);

const Arrow: React.FC<{ label: string }> = ({ label }) => (
  <button aria-label={label} className={`${box} w-3.5 border-l-0`}>
    <svg width="7" height="5" viewBox="0 0 7 5" fill="#555"><path d="M0 0h7L3.5 5z" /></svg>
  </button>
);

const Toolbar: React.FC = () => (
  <div className="flex items-center gap-px pl-[3px]">
    <button aria-label="패널" className={`${box} w-5`}>
      <svg width="14" height="14" viewBox="0 0 14 14" fill="none" stroke="#444"><path d="M3 1.5h10v11H3z" /><path d="M1 5v7l4-3.5z" fill="#333" /></svg>
    </button>
    <div className="flex"><button className={`${box} w-[19px] bg-white text-[13px] text-[#888]`}>주</button><Arrow label="종목 구분" /></div>
    <button className={`${box} w-5 text-[13px]`}>전</button>
    <div className="flex">
      <input aria-label="종목코드" defaultValue="065500" className="h-5 w-[55px] border border-[#8a8a8a] bg-white px-0.5" />
      <Arrow label="종목 목록" />
    </div>
    <button aria-label="종목 찾기" className={`${box} w-[18px]`}><Search size={13} color="#777" strokeWidth={2.5} /></button>
    <div className="flex">
      <button aria-label="소리" className={`${box} w-[18px]`}>
        <svg width="12" height="12" viewBox="0 0 12 12" fill="#555"><path d="M0 4h3l4-4v12l-4-4H0zM9 4h1v1H9zM11 4h1v1h-1zM9 7h1v1H9zM11 7h1v1h-1z" /></svg>
      </button>
      <button aria-label="소리 설정" className={`${box} w-2.5 border-l-0`}><ChevronDown size={8} strokeWidth={4} color="#555" /></button>
    </div>
    <div className="flex h-5 w-[81px] items-center gap-0.5 overflow-hidden border border-[#8a8a8a] bg-[#efefef] text-[13px] whitespace-nowrap text-[#800040]">
      <span className="flex h-full w-4 shrink-0 items-center justify-center bg-[#8f7b70] text-white">주</span>
      <span>오리엔트정</span>
    </div>
    <Group items={['일', '주', '월', '년']} />
    <Group items={['분', '초', '틱']} active="초" />
    <Group items={['1', '3', '5', '10', '15', '30', '45', '60']} active="5" />
    <div className="flex">
      <input aria-label="주기" defaultValue="5" className="h-5 w-[25px] border border-[#8a8a8a] bg-white text-center" />
      <Arrow label="주기 목록" />
    </div>
    <input aria-label="표시 봉수" defaultValue="4517" className="h-5 w-[30px] border border-[#8a8a8a] bg-white text-center" />
    <span className="w-[33px] whitespace-nowrap text-[#555]">/6300</span>
    <div className="flex h-5 border-y border-l border-[#8a8a8a] bg-[#e8e8e8]">
      <button aria-label="봉 추가" className={cell}>
        <svg width="15" height="15" viewBox="0 0 15 15" fill="#444"><path d="M1 2h3v7H1zM2 0h1v11H2z" /><path d="M6 3h3v4H6zM7 1h1v7H7z" fill="#999" /><path d="M11 8v2H9v2h2v2h2v-2h2v-2h-2V8z" /></svg>
      </button>
      <button aria-label="지표 추가" className={cell}>
        <svg width="15" height="15" viewBox="0 0 15 15" fill="none" stroke="#666"><path d="M0 7l4-4 4 4 5-5M0 3l4 4 5-4 4 3" /><path d="M12 8v6M9 11h6" strokeWidth="2" stroke="#444" /></svg>
      </button>
      <button aria-label="저장" className={cell}><Save size={15} color="#555" /></button>
      <button aria-label="설정" className={cell}><Settings size={15} color="#555" strokeWidth={2.5} /></button>
    </div>
    <label className="flex items-center gap-1 pl-0.5">
      <input type="checkbox" className="h-[13px] w-[13px] appearance-none border border-[#8a8a8a] bg-white" />
      D
    </label>
  </div>
);

const QuoteRow: React.FC = () => (
  <div className="flex items-center gap-0.5 pl-[3px] whitespace-nowrap">
    <dl className="flex h-5 divide-x divide-[#bbb] border border-[#8a8a8a] bg-[#efefef] leading-[18px] text-[#ee1c10]">
      <div className="flex w-[172px] justify-end gap-1 pr-px">
        <dd>16,090</dd>
        <dd className="w-3">▲</dd>
        <dd className="w-11 text-right">3,020</dd>
        <dd>+23.11%</dd>
      </div>
      <div className="flex w-[171px] justify-end gap-1 pr-px">
        <dd className="text-black">49,332,158</dd>
        <dd className="w-[52px] text-right">300.72%</dd>
        <dd className="text-black">55.41%</dd>
      </div>
      <div className="w-[82px] pr-px text-right text-black"><dd><Mixed text="740,115백만" /></dd></div>
      <div className="flex w-[140px] justify-between pr-1 pl-0.5"><dt className="text-[13px] text-black">최우선</dt><dd>15,840</dd><dd>15,820</dd></div>
      <div className="flex w-[184px] justify-between pr-1.5 pl-0.5">
        <dt className="text-[13px] text-black">시</dt><dd>14,250</dd><dt className="text-[13px] text-black">고</dt><dd>16,870</dd><dt className="text-[13px] text-black">저</dt><dd>13,560</dd>
      </div>
    </dl>
    <button className="h-5 w-10 border border-[#8a8a8a] bg-[#f5d0ca] text-[13px] leading-4">매수</button>
    <button className="h-5 w-10 border border-[#8a8a8a] bg-[#c5dcf2] text-[13px] leading-4">매도</button>
  </div>
);

const CrossBadge: React.FC<{ second: string }> = ({ second }) => (
  <div className="absolute inset-x-px z-10 h-[29px] overflow-hidden border border-black bg-[#ffd966] leading-[13px]" style={{ top: pctY(233) }}>
    <p className="text-[#444]">16,121</p>
    <p className="text-[#ff0000]">{second}</p>
  </div>
);

const ChartPanel: React.FC = () => (
  <main className="flex flex-1 border-t border-[#888] bg-white">
    <div className="relative w-[42px] border-r border-[#999]">
      <Axis side="left" labels={LEFT_LABELS} />
      <button aria-label="표" className="absolute top-[19px] left-1 flex h-3.5 w-3.5 items-center justify-center border border-black bg-[#eee]">
        <svg width="10" height="10" viewBox="0 0 10 10" stroke="#666" fill="none" shapeRendering="crispEdges"><path d="M.5.5h9v9h-9zM.5 3.5h9M.5 6.5h9M3.5 .5v9M6.5 .5v9" /></svg>
      </button>
      <CrossBadge second="23,34%" />
      <p className="absolute left-1 leading-3 text-[#ee1c10]" style={{ top: pctY(258) }}>ı,11%</p>
      <span className="absolute inset-x-0 h-px bg-[#999]" style={{ top: pctY(882) }} />
    </div>

    <div className="relative flex-1 overflow-hidden">
      <Plot />
      <p className="absolute top-px left-[11px] border border-[#bbb] bg-[#efefef] px-[3px] leading-[14px] whitespace-nowrap text-[#444]">오리엔트정공 매물대 수(13)</p>
      <span className="absolute top-[5px] left-[3px] h-1.5 w-1.5 border border-[#777] bg-[#bbb]" />
      <PlotLabel y={125} right={1801} className="text-[#ff0000]">최고 16,870 (-4,62%, 15:13)</PlotLabel>
      <PlotLabel y={402} right={1864} className="text-[#ff0000]">피봇2차저항선 15,323 (17,24%)</PlotLabel>
      <PlotLabel y={615} right={1864} className="text-[#00e000]">당일시가 14,250 (9,03%)</PlotLabel>
      <PlotLabel y={620} right={1864} className="text-[#cc0099]">피봇1차저항선 14,197 (8,62%)</PlotLabel>
      <PlotLabel y={860} right={1864} className="text-[#993300]">전일종가 13,070 (0,00%)</PlotLabel>
      <PlotLabel y={843} x={62} className="text-[#0000dd]">최저 13,070 (23,11%, 15:18)</PlotLabel>
    </div>

    <div className="relative w-12 border-x border-[#999]">
      <svg className="absolute inset-0 h-full w-2" viewBox={`0 ${TOP} 8 ${HEIGHT}`} preserveAspectRatio="none" stroke="#888" shapeRendering="crispEdges">
        {RIGHT_LABELS.map(([y]) => <path key={y} d={`M0 ${y}h4`} />)}
        {RIGHT_LABELS.slice(0, 14).map(([y]) => <path key={y} d={`M0 ${y + 13}h2M0 ${y + 27}h3M0 ${y + 40}h2`} />)}
      </svg>
      <p className="absolute top-0 left-px text-[11px] leading-[13px] text-[#ee1c10]">LC:23,11</p>
      <p className="absolute top-3 left-px text-[11px] leading-[13px] text-[#1a5fd0]">HC:-4,62</p>
      <Axis side="right" labels={RIGHT_LABELS} />
      <CrossBadge second="-23,34%" />
      <p className="absolute left-2 leading-3 text-[#ee1c10]" style={{ top: pctY(260) }}>23,11%</p>
      <span className="absolute inset-x-0 h-px bg-[#999]" style={{ top: pctY(882) }} />
      <button aria-label="지표 닫기" className="absolute right-0.5 flex h-2 w-2 items-center justify-center bg-[#444] text-white" style={{ top: pctY(886) }}>
        <X size={7} strokeWidth={3} />
      </button>
    </div>
  </main>
);

const TimeAxis: React.FC = () => (
  <div className="flex h-[19px] border-y border-[#999] bg-white leading-[14px] text-[#444]">
    <div className="w-[42px] border-r border-[#999]" />
    <div className="relative flex-1">
      <span className="absolute left-px text-[14px] font-bold">04/01</span>
      {TIMES.map(([x, t]) => (
        <span key={x} className="absolute h-full border-l border-[#999]" style={{ left: pctX(x) }}>{t}</span>
      ))}
      <span className="absolute h-4 w-[136px] border border-black bg-[#ffd966] text-center leading-[13px] whitespace-nowrap" style={{ left: pctX(1200) }}>
        2025/04/02(수) 13:16:00
      </span>
    </div>
    <div className="w-12 border-x border-[#999] pl-1 whitespace-nowrap">15:19:5</div>
  </div>
);

const raised = 'flex h-4 w-[17px] items-center justify-center border border-white border-r-[#888] border-b-[#888] bg-[#efefef] text-black';

const tool = 'flex h-4 w-[17px] items-center justify-center text-[#777]';

const ScrollRow: React.FC = () => (
  <div className="flex h-5 items-start bg-[#efefef]">
    <button aria-label="왼쪽으로" className={raised}>
      <svg width="5" height="8" viewBox="0 0 5 8"><path d="M5 0v8L0 4z" /></svg>
    </button>
    <div className="flex h-4 flex-1 bg-[#f8f8f8]">
      <div className="w-[430px] shrink-0" />
      <div className="flex-1 border border-white border-r-[#888] border-b-[#888] bg-[#efefef]" />
    </div>
    <button aria-label="재생" className={raised}><svg width="5" height="8" viewBox="0 0 5 8"><path d="M0 0v8l5-4z" /></svg></button>
    <button aria-label="뒤로" className={raised}><svg width="9" height="8" viewBox="0 0 9 8"><path d="M4 0v8L0 4zM9 0v8L5 4z" /></svg></button>
    <button aria-label="정지" className={raised}><span className="h-2 w-1.5 bg-black" /></button>
    <button aria-label="앞으로" className={raised}><svg width="9" height="8" viewBox="0 0 9 8"><path d="M0 0v8l4-4zM5 0v8l4-4z" /></svg></button>
    <div className="flex w-20 flex-col items-center">
      <input
        type="range"
        aria-label="재생 속도"
        defaultValue={74}
        className="h-2.5 w-[69px] appearance-none bg-[linear-gradient(#888,#888)] bg-[length:100%_2px] bg-center bg-no-repeat [&::-webkit-slider-thumb]:h-2.5 [&::-webkit-slider-thumb]:w-1 [&::-webkit-slider-thumb]:appearance-none [&::-webkit-slider-thumb]:border [&::-webkit-slider-thumb]:border-[#888] [&::-webkit-slider-thumb]:bg-white"
      />
      <svg width="68" height="3" viewBox="0 0 68 3" stroke="#000" shapeRendering="crispEdges" className="mt-1">
        {Array.from({ length: 11 }, (_, i) => <path key={i} d={`M${1.5 + i * 6.5} 0v3`} />)}
      </svg>
    </div>
    <div className="flex pr-0.5">
      <button aria-label="창 추가" className={tool}>
        <svg width="14" height="14" viewBox="0 0 14 14" fill="none" stroke="currentColor"><path d="M5 10.500H2L.5 9V.5h10V5" /><path d="M5.500 5.500h8v8h-8zM9.500 5.500v8M5.500 9.500h8" stroke="#555" /></svg>
      </button>
      <button aria-label="창 복사" className={tool}>
        <svg width="14" height="14" viewBox="0 0 14 14" fill="none" stroke="currentColor"><path d="M5 9.500H.5V.5h9V5" /><path d="M5.500 5.500h8v8h-8zM5.500 7h8" stroke="#555" /></svg>
      </button>
      <button aria-label="영역" className={tool}>
        <svg width="14" height="14" viewBox="0 0 14 14" fill="none" stroke="currentColor"><path d="M0 1.5h14M0 12.500h14" strokeDasharray="1 1" /><path d="M0 9l3-3 4 3 6-5" /></svg>
      </button>
      <button aria-label="십자선" className={`${tool} border-t border-l border-[#888] bg-white text-[#444]`}>
        <svg width="14" height="14" viewBox="0 0 14 14" fill="none" stroke="currentColor"><path d="M4.500 0v14M0 3.500h14M6 6l6 6M6.500 10V6.500H10" /></svg>
      </button>
      <button aria-label="수평선" className={tool}>
        <svg width="14" height="14" viewBox="0 0 14 14" fill="none" stroke="currentColor"><path d="M0 2.500h14" stroke="#444" /><path d="M0 12l3-2 4-6 2 5 2-2 2 5" /></svg>
      </button>
      <button aria-label="수직선" className={tool}>
        <svg width="14" height="14" viewBox="0 0 14 14" fill="none" stroke="currentColor"><path d="M4.500 0v14" stroke="#624" /><path d="M0 11l3-2M5 9l3-5 2 6 2-2 2 3" /></svg>
      </button>
      <button aria-label="추세선" className={tool}>
        <svg width="14" height="14" viewBox="0 0 14 14" fill="none" stroke="currentColor"><path d="M1 12L11 1" strokeWidth="1.5" stroke="#555" /><path d="M0 12l5-3 4-5 1 6 2-1 2 3" /></svg>
      </button>
      <button aria-label="전체 지우기" className={tool}>
        <svg width="14" height="14" viewBox="0 0 14 14" fill="none" stroke="currentColor"><path d="M1 7l5-5h6v3L8 9H1zM1 7h6l5-5M7 7v2" /><path d="M8.500 13v-3M11.500 9v4M13.500 9v4" stroke="#444" /></svg>
      </button>
      <button aria-label="차트 비교" className={tool}>
        <svg width="14" height="14" viewBox="0 0 14 14" fill="none" stroke="currentColor"><path d="M3.500 4V.5h10v8H10" /><path d="M.5 4.500h9v9h-9z" stroke="#444" /><path d="M1 11l2-3 3 3 3-4M5 3l3-1 4 1" /></svg>
      </button>
      <button aria-label="확대경" className={tool}><Search size={15} color="#555" /></button>
      <button aria-label="축소" className={tool}><Minus size={13} strokeWidth={4} color="#555" /></button>
      <button aria-label="확대" className={tool}><Plus size={13} strokeWidth={4} color="#555" /></button>
      <button className={`${tool} font-['Liberation_Sans',sans-serif] text-[16px] font-bold text-[#555]`}>A</button>
    </div>
  </div>
);

export default function App() {
  return (
    <div className="flex min-h-screen flex-col bg-black pt-px pb-[3px] font-['Noto_Sans_Mono_CJK_KR','Noto_Sans_CJK_KR',sans-serif] text-[12px] text-black">
      <div className="mr-px ml-px"><TitleBar /></div>
      <div className="mr-[3px] ml-[3px] flex flex-1 flex-col bg-[#d1d1d1]">
        <div className="flex flex-col gap-[3px] pt-[5px] pb-[3px]">
          <Toolbar />
          <QuoteRow />
        </div>
        <div className="mr-[3px] ml-1 flex flex-1 flex-col">
          <ChartPanel />
          <TimeAxis />
          <ScrollRow />
        </div>
      </div>
    </div>
  );
}
